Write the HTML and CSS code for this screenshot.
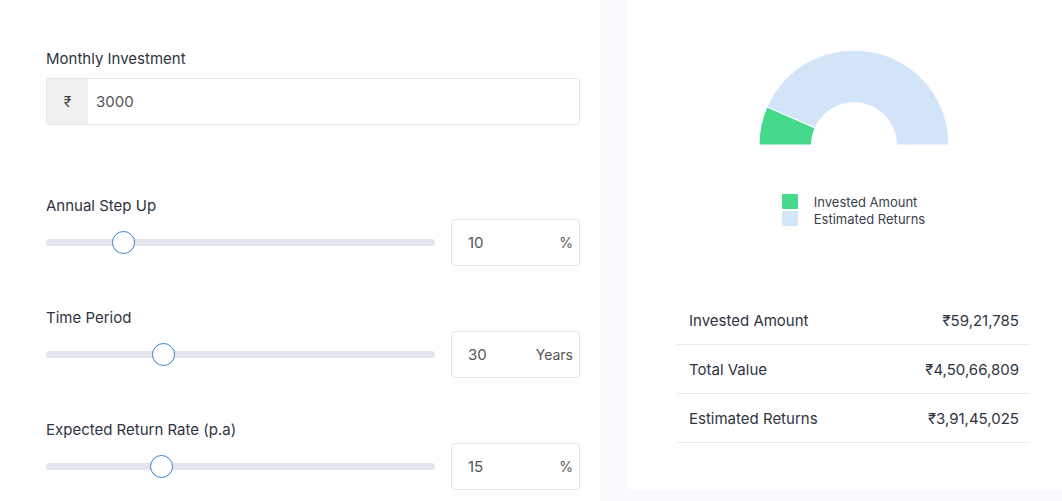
FILE: index.html
```html
<!DOCTYPE html>
<html lang="en">
<head>
  <meta charset="UTF-8">
  <meta name="viewport" content="width=device-width, initial-scale=1.0">
  <title>Step Up SIP Calculator</title>
  <link rel="stylesheet" href="styles.css">
</head>
<body>
  <div class="calc">

    <!-- Inputs -->
    <div class="inputs">
      <div class="field first">
        <label class="field-label">Monthly Investment</label>
        <div class="amount-box">
          <span class="prefix">₹</span>
          <input class="amount-input" type="text" value="3000">
        </div>
      </div>

      <div class="field">
        <label class="field-label">Annual Step Up</label>
        <div class="slider-row">
          <div class="track"><span class="thumb" style="left: 20%"></span></div>
          <div class="value-box">
            <input class="value-input" type="text" value="10">
            <span class="unit">%</span>
          </div>
        </div>
      </div>

      <div class="field">
        <label class="field-label">Time Period</label>
        <div class="slider-row">
          <div class="track"><span class="thumb" style="left: 30.3%"></span></div>
          <div class="value-box">
            <input class="value-input" type="text" value="30">
            <span class="unit">Years</span>
          </div>
        </div>
      </div>

      <div class="field">
        <label class="field-label">Expected Return Rate (p.a)</label>
        <div class="slider-row">
          <div class="track"><span class="thumb" style="left: 29.6%"></span></div>
          <div class="value-box">
            <input class="value-input" type="text" value="15">
            <span class="unit">%</span>
          </div>
        </div>
      </div>
    </div>

    <!-- Results -->
    <div class="results">
      <svg class="chart" width="190" height="96" viewBox="0 0 190 96">
        <path d="M0,95 A95,95 0 0 1 7.98,56.9 L56.07,77.95 A42.5,42.5 0 0 0 52.5,95 Z" fill="#46d98b" stroke="#fff" stroke-width="1"/>
        <path d="M7.98,56.9 A95,95 0 0 1 190,95 L137.5,95 A42.5,42.5 0 0 0 56.07,77.95 Z" fill="#d3e4f9" stroke="#fff" stroke-width="1"/>
      </svg>

      <div class="legend">
        <div class="legend-item"><span class="swatch green"></span>Invested Amount</div>
        <div class="legend-item"><span class="swatch blue"></span>Estimated Returns</div>
      </div>

      <div class="summary">
        <div class="summary-row"><span>Invested Amount</span><span>₹59,21,785</span></div>
        <div class="summary-row"><span>Total Value</span><span>₹4,50,66,809</span></div>
        <div class="summary-row"><span>Estimated Returns</span><span>₹3,91,45,025</span></div>
      </div>
    </div>

  </div>
</body>
</html>
```

FILE: styles.css
```css
* {
  margin: 0;
  padding: 0;
  box-sizing: border-box;
}

body {
  font-family: 'Inter', 'Noto Sans', sans-serif;
  background-color: #f9fafd;
  color: #2f3441;
  overflow: hidden;
}

.calc {
  display: flex;
  gap: 28px;
  width: 1079px;
  align-items: flex-start;
}

.inputs {
  width: 600px;
  height: 501px;
  background-color: #fff;
  padding: 49px 20px 0 46px;
}

.field {
  margin-top: 42px;
}

.field.first {
  margin-top: 0;
  margin-bottom: 71px;
}

.field-label {
  display: block;
  font-size: 15px;
  line-height: 20px;
  color: #2f3441;
}

.amount-box {
  display: flex;
  margin-top: 9px;
  height: 47px;
  border: 1px solid #e4e5ea;
  border-radius: 3px;
  overflow: hidden;
}

.prefix {
  width: 41px;
  background-color: #f0f0f2;
  display: flex;
  justify-content: center;
  align-items: center;
  font-size: 14px;
  color: #444;
}

.amount-input {
  flex: 1;
  border: none;
  outline: none;
  padding-left: 8px;
  font-family: inherit;
  font-size: 15px;
  color: #555;
}

.slider-row {
  display: flex;
  align-items: center;
  gap: 16px;
  margin-top: 3px;
}

.track {
  position: relative;
  width: 389px;
  height: 7px;
  border-radius: 4px;
  background-color: #e3e5ee;
}

.thumb {
  position: absolute;
  top: 50%;
  width: 23px;
  height: 23px;
  margin: -11.5px 0 0 -11.5px;
  border-radius: 50%;
  background-color: #fff;
  border: 1.5px solid #3b7fc8;
}

.value-box {
  display: flex;
  align-items: center;
  width: 129px;
  height: 47px;
  border: 1px solid #e4e5ea;
  border-radius: 3px;
  padding: 0 6px 0 16px;
}

.value-input {
  width: 50px;
  flex: 1;
  border: none;
  outline: none;
  font-family: inherit;
  font-size: 15px;
  color: #555;
}

.unit {
  font-size: 14px;
  color: #555;
}

.results {
  width: 451px;
  background-color: #fff;
  padding: 50px 49px 47px;
  display: flex;
  flex-direction: column;
  align-items: center;
}

.chart {
  display: block;
}

.legend {
  margin-top: 47px;
  font-size: 13px;
  color: #3a3f4b;
}

.legend-item {
  display: flex;
  align-items: center;
  height: 17px;
}

.swatch {
  width: 16px;
  height: 15px;
  margin-right: 16px;
  border-radius: 1px;
}

.swatch.green {
  background-color: #46d98b;
}

.swatch.blue {
  background-color: #d6e6fa;
}

.summary {
  width: 100%;
  margin-top: 69px;
}

.summary-row {
  display: flex;
  justify-content: space-between;
  align-items: center;
  height: 49px;
  padding: 0 11px 0 12px;
  border-bottom: 1px solid #e9eaef;
  font-size: 15px;
  color: #2f3441;
}
```
